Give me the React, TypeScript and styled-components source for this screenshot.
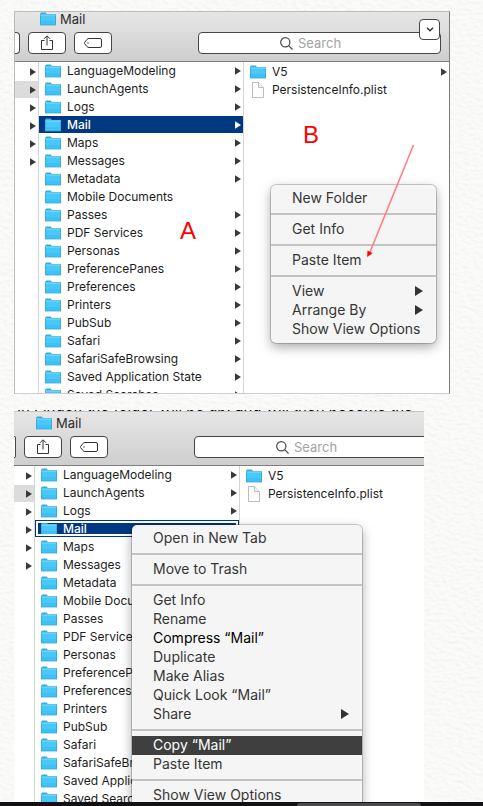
import React from "react";
import styled, { createGlobalStyle, css } from "styled-components";

const navy = "#003882";

const GlobalStyle = createGlobalStyle`
  *, *::before, *::after { box-sizing: border-box; }
  body { margin: 0; background: #fafaf8; font-family: Inter, "Liberation Sans", sans-serif; color: #222; }
  ul { list-style: none; margin: 0; padding: 0; }
  button, input { font: inherit; color: inherit; margin: 0; padding: 0; border: 0; background: none; }
  svg { display: block; flex: none; }
`;

const Page = styled.main`
  position: relative;
  display: flex;
  flex-direction: column;
  height: 100vh;
  overflow: hidden;
`;

const Paper = styled.svg`
  position: absolute;
  inset: 0;
  width: 100%;
  height: 100%;
  opacity: 0.25;
`;

const FramedWindow = styled.section`
  position: relative;
  display: flex;
  flex-direction: column;
  flex: none;
  max-height: 383px;
  margin: 11px 33px 16px 14px;
  overflow: hidden;
  background: #fff;
  border: 1px solid #bcbcbc;
  border-right-color: #7c7c7c;
  border-bottom-color: #cfcfcf;
`;

const OpenWindow = styled.section`
  position: relative;
  display: flex;
  flex-direction: column;
  flex: 1;
  min-height: 0;
  margin: 0 59px 0 14px;
  overflow: hidden;
  background: #fff;
`;

const CutLine = styled.p`
  display: flex;
  align-items: flex-end;
  flex: none;
  height: 2px;
  margin: 0;
  padding-left: 3px;
  overflow: hidden;
  border-bottom: 1px solid #c4c4c4;
  white-space: nowrap;
  font-size: 15px;
  line-height: 11px;
  color: #000;
`;

const Toolbar = styled.header<{ $top: number }>`
  flex: none;
  padding: ${(p) => p.$top}px 8px 7px 0;
  background: linear-gradient(#e6e6e6, #cecece);
  border-bottom: 1px solid #7f7f7f;
`;

const Title = styled.h2<{ $cut: number }>`
  display: flex;
  align-items: center;
  gap: 4px;
  height: 14px;
  margin: 0 0 6px;
  padding-left: ${(p) => 25 - p.$cut}px;
  font-size: 13px;
  font-weight: 400;
  line-height: 14px;
  color: #2c2c2c;
`;

const Tools = styled.div`
  display: flex;
  gap: 8px;
`;

const toolFace = css`
  height: 22px;
  background: #fff;
  border: 1px solid #464646;
  border-radius: 4px;
`;

const ButtonEnd = styled.button<{ $cut: number }>`
  ${toolFace}
  flex: none;
  width: ${(p) => 5 - p.$cut}px;
  border-left: 0;
  border-radius: 0 4px 4px 0;
`;

const ToolButton = styled.button`
  ${toolFace}
  display: grid;
  place-items: center;
  flex: none;
  width: 38px;
`;

const SearchField = styled.label`
  ${toolFace}
  display: flex;
  align-items: center;
  flex: 1 0 243px;
  gap: 5px;
  min-width: 0;
  margin-left: 78px;
  padding-left: 81px;
`;

const SearchInput = styled.input`
  flex: 1;
  width: 0;
  min-width: 0;
  height: 18px;
  font-size: 13px;
  outline: 0;
  &::placeholder { color: #a3a3a3; opacity: 1; }
`;

const OverflowButton = styled.button`
  ${toolFace}
  position: absolute;
  top: 7px;
  right: 9px;
  display: grid;
  place-items: center;
  width: 21px;
  height: 21px;
`;

const Columns = styled.div`
  display: flex;
  flex: 1;
  min-height: 0;
`;

const ParentColumn = styled.ul<{ $cut: number }>`
  flex: none;
  width: ${(p) => 24 - p.$cut}px;
  border-right: 1px solid #d4d4d4;
`;

const ParentRow = styled.li<{ $active?: boolean }>`
  display: flex;
  align-items: center;
  justify-content: flex-end;
  height: 18px;
  padding-right: 2px;
  border-top: 1px solid transparent;
  background: ${(p) => (p.$active ? "#dcdcdc" : "transparent")};
  background-clip: padding-box;
`;

const FolderColumn = styled.ul`
  flex: none;
  width: 205px;
  border-right: 1px solid #d4d4d4;
`;

const FileColumn = styled.ul`
  flex: 1;
  min-width: 0;
  && { padding-top: 1px; }
`;

type RowState = "plain" | "selected" | "outlined";

const Row = styled.button<{ $state: RowState }>`
  position: relative;
  display: flex;
  align-items: center;
  gap: 6px;
  width: 100%;
  height: 17px;
  margin-bottom: 1px;
  padding: 0 2px 0 6px;
  text-align: left;
  font-size: 12px;
  line-height: 17px;
  white-space: nowrap;
  color: #1c1c1c;
  ${(p) => p.$state !== "plain" && css`
    background: ${navy};
    color: #fff;
    font-weight: 500;
  `}
  ${(p) => p.$state === "outlined" && css`
    padding: 0 3px 0 5px;
    border: 1px solid ${navy};
    &::after {
      content: "";
      position: absolute;
      inset: 0;
      border: 2px solid #fff;
    }
  `}
`;

const RowItem = styled.li`
  display: flex;
`;

const RowLabel = styled.span`
  flex: 1;
`;

const Menu = styled.div<{ $left: number; $top: number; $width: number }>`
  position: absolute;
  left: ${(p) => p.$left}px;
  top: ${(p) => p.$top}px;
  width: ${(p) => p.$width}px;
  padding: 4px 0;
  background: #f5f5f5;
  border-radius: 5px;
  box-shadow: 0 0 0 1px rgba(0, 0, 0, 0.18), 0 4px 12px rgba(0, 0, 0, 0.35);
`;

const MenuItem = styled.button<{ $tone?: "strong" | "active" }>`
  display: flex;
  align-items: center;
  justify-content: space-between;
  width: 100%;
  height: 19px;
  padding: 0 13px 2px 21px;
  font-size: 14px;
  line-height: 17px;
  white-space: nowrap;
  text-align: left;
  color: ${(p) => (p.$tone === "active" ? "#fff" : p.$tone === "strong" ? "#000" : "#363636")};
  background: ${(p) => (p.$tone === "active" ? "#3f3f3f" : "transparent")};
`;

const Separator = styled.hr`
  height: 2px;
  margin: 5px 0;
  border: 0;
  background: #c3c3c3;
`;

const Mark = styled.span<{ $left: number; $top: number }>`
  position: absolute;
  left: ${(p) => p.$left}px;
  top: ${(p) => p.$top}px;
  font-family: "Liberation Sans", sans-serif;
  font-size: 24px;
  line-height: 24px;
  color: #f00;
`;

const Pointer = styled.svg`
  position: absolute;
  left: 350px;
  top: 132px;
`;

const Dock = styled.footer`
  position: relative;
  display: flex;
  flex: none;
  height: 4px;
  padding: 1px 62px 0;
  background: #111013;
  &::after {
    content: "";
    width: 124px;
    margin-left: auto;
    background: #4b4a4d;
    border-radius: 3px 3px 0 0;
  }
`;

const Folder = () => (
  <svg width="16" height="14" viewBox="0 0 16 14" aria-hidden="true">
    <path d="M0 2 1 .5h4.6L7 2h9v4H0z" fill="#37addb" />
    <path d="M.5 2.5h15V4H.5z" fill="#8bdcf8" />
    <path d="M0 3.5h16V13H0z" fill="#49c9fb" />
    <path d="M0 9h16v4H0z" fill="#40c1f6" />
    <path d="M0 13h16M.5 3.5v9.5M15.5 3.5v9.5" stroke="#2fa7d6" strokeWidth="1" opacity=".75" />
  </svg>
);

const Doc = () => (
  <svg width="16" height="16" viewBox="0 0 16 16" aria-hidden="true">
    <path d="M2.5.5h6l5 5v10h-11z" fill="#fdfdfd" stroke="#bdbdbd" />
    <path d="M8.5.5v5h5" fill="#f2f2f2" stroke="#bdbdbd" />
  </svg>
);

const Triangle = ({ color = "#3a3a3a" }: { color?: string }) => (
  <svg width="6" height="8" viewBox="0 0 6 8" aria-hidden="true">
    <path d="M0 .3 6 4 0 7.700z" fill={color} />
  </svg>
);

const SubmenuArrow = () => (
  <svg width="8" height="10" viewBox="0 0 8 10" aria-hidden="true">
    <path d="M0 0 8 5 0 10z" fill="#333" />
  </svg>
);

const folders = [
  "LanguageModeling", "LaunchAgents", "Logs", "Mail", "Maps", "Messages", "Metadata",
  "Mobile Documents", "Passes", "PDF Services", "Personas", "PreferencePanes", "Preferences",
  "Printers", "PubSub", "Safari", "SafariSafeBrowsing", "Saved Application State", "Saved Searches",
];

type BrowserProps = { cut: number; top: number; mailState: RowState; arrows: boolean };

function Browser({ cut, top, mailState, arrows }: BrowserProps) {
  return (
    <>
      <Toolbar $top={top}>
        <Title $cut={cut}><Folder />Mail</Title>
        <Tools>
          <ButtonEnd $cut={cut} aria-label="Actions" />
          <ToolButton aria-label="Share">
            <svg width="12" height="16" viewBox="0 0 12 16" fill="none" stroke="#333">
              <path d="M3.5 5.5h-3v9h11v-9h-3M6 10.5V1M3 3.8 6 .8l3 3" />
            </svg>
          </ToolButton>
          <ToolButton aria-label="Tags">
            <svg width="18" height="10" viewBox="0 0 18 10" fill="none" stroke="#333">
              <path d="M5 .5h11q1.500 0 1.500 1.500v6q0 1.500-1.500 1.500H5Q3.800 9.500 3 8.600L.7 5.700Q.2 5 .7 4.300L3 1.400Q3.800.5 5 .5z" />
              <circle cx="4" cy="5" r=".7" fill="#333" stroke="none" />
            </svg>
          </ToolButton>
          <SearchField>
            <svg width="13" height="13" viewBox="0 0 13 13" fill="none" stroke="#484848" strokeWidth="1.200">
              <circle cx="5.300" cy="5.300" r="4.600" />
              <path d="m8.700 8.700 3.800 3.800" />
            </svg>
            <SearchInput placeholder="Search" aria-label="Search" />
          </SearchField>
        </Tools>
      </Toolbar>
      <Columns>
        <ParentColumn $cut={cut}>
          {folders.slice(0, 6).map((name, i) => (
            <ParentRow key={name} $active={i === 1}><Triangle /></ParentRow>
          ))}
        </ParentColumn>
        <FolderColumn>
          {folders.map((name, i) => {
            const state = name === "Mail" ? mailState : "plain";
            const hasArrow = name !== "Mobile Documents" && (arrows || i < 4);
            return (
              <RowItem key={name}>
                <Row $state={state}>
                  <Folder />
                  <RowLabel>{name}</RowLabel>
                  {hasArrow && <Triangle color={state === "plain" ? undefined : "#fff"} />}
                </Row>
              </RowItem>
            );
          })}
        </FolderColumn>
        <FileColumn>
          <RowItem>
            <Row $state="plain"><Folder /><RowLabel>V5</RowLabel>{arrows && <Triangle />}</Row>
          </RowItem>
          <RowItem>
            <Row $state="plain"><Doc /><RowLabel>PersistenceInfo.plist</RowLabel></Row>
          </RowItem>
        </FileColumn>
      </Columns>
    </>
  );
}

export default function App() {
  return (
    <>
      <GlobalStyle />
      <Page>
        <Paper aria-hidden="true">
          <filter id="grain" x="0" y="0" width="100%" height="100%" colorInterpolationFilters="sRGB">
            <feTurbulence type="fractalNoise" baseFrequency="0.18 0.28" numOctaves="3" seed="4" />
            <feDiffuseLighting lightingColor="#fafaf8" surfaceScale="0.5" diffuseConstant="1.130">
              <feDistantLight azimuth="120" elevation="62" />
            </feDiffuseLighting>
          </filter>
          <rect width="100%" height="100%" filter="url(#grain)" />
        </Paper>
        <FramedWindow>
          <Browser cut={0} top={0} mailState="selected" arrows />
          <OverflowButton aria-label="More">
            <svg width="8" height="5" viewBox="0 0 8 5" fill="none" stroke="#333" strokeWidth="1.400">
              <path d="m1 .8 3 3 3-3" />
            </svg>
          </OverflowButton>
          <Mark $left={165} $top={207}>A</Mark>
          <Mark $left={288} $top={111}>B</Mark>
          <Menu $left={256} $top={173} $width={165}>
            <MenuItem>New Folder</MenuItem>
            <Separator />
            <MenuItem>Get Info</MenuItem>
            <Separator />
            <MenuItem>Paste Item</MenuItem>
            <Separator />
            <MenuItem>View<SubmenuArrow /></MenuItem>
            <MenuItem>Arrange By<SubmenuArrow /></MenuItem>
            <MenuItem>Show View Options</MenuItem>
          </Menu>
          <Pointer width="52" height="116" viewBox="0 0 52 116" aria-hidden="true">
            <path d="M48.500 1 5 108" stroke="#ff8080" strokeWidth="1.600" />
            <path d="M2.500 112.500 2.800 107l4.400 2.200z" fill="#f00" stroke="#f00" strokeWidth=".6" />
          </Pointer>
        </FramedWindow>
        <OpenWindow>
          <CutLine>In Finder, the folder will be up, and will then become the</CutLine>
          <Browser cut={3} top={4} mailState="outlined" arrows={false} />
          <Menu $left={118} $top={115} $width={230}>
            <MenuItem>Open in New Tab</MenuItem>
            <Separator />
            <MenuItem>Move to Trash</MenuItem>
            <Separator />
            <MenuItem>Get Info</MenuItem>
            <MenuItem>Rename</MenuItem>
            <MenuItem $tone="strong">Compress “Mail”</MenuItem>
            <MenuItem>Duplicate</MenuItem>
            <MenuItem>Make Alias</MenuItem>
            <MenuItem>Quick Look “Mail”</MenuItem>
            <MenuItem>Share<SubmenuArrow /></MenuItem>
            <Separator />
            <MenuItem $tone="active">Copy “Mail”</MenuItem>
            <MenuItem>Paste Item</MenuItem>
            <Separator />
            <MenuItem>Show View Options</MenuItem>
          </Menu>
        </OpenWindow>
        <Dock />
      </Page>
    </>
  );
}
